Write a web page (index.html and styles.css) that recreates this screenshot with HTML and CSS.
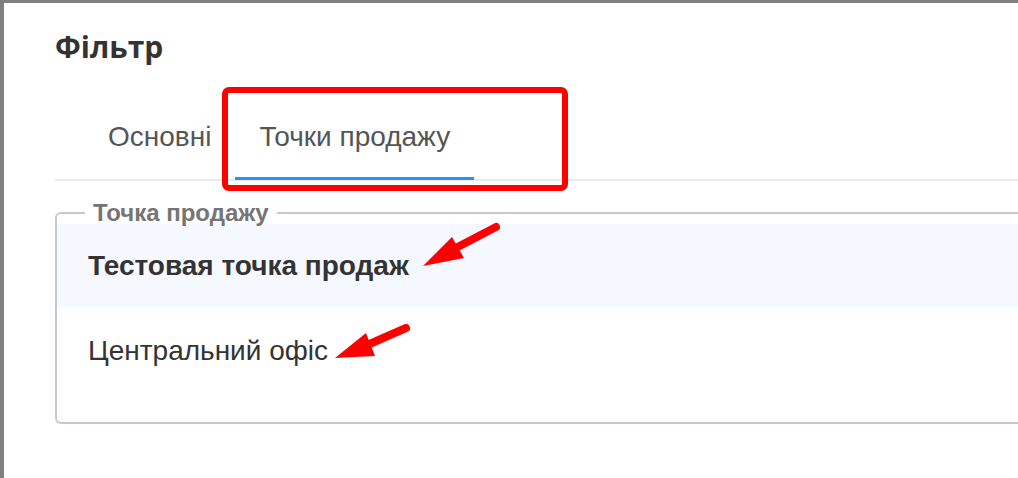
FILE: index.html
```html
<!DOCTYPE html>
<html lang="uk">
<head>
<meta charset="utf-8">
<title>Фільтр</title>
<link rel="stylesheet" href="styles.css">
</head>
<body>
<div class="modal">
  <h1 class="title">Фільтр</h1>
  <div class="tabs">
    <div class="tab">Основні</div>
    <div class="tab tab-active">Точки продажу</div>
  </div>
  <fieldset class="group">
    <legend class="group-legend">Точка продажу</legend>
    <div class="row row-selected">Тестовая точка продаж</div>
    <div class="row">Центральний офіс</div>
  </fieldset>
</div>
<svg class="annot" width="1018" height="478" viewBox="0 0 1018 478">
  <rect x="225" y="90" width="340" height="98" rx="4" ry="4" fill="none" stroke="#ff0000" stroke-width="6"/>
  <line x1="496" y1="227" x2="450" y2="251" stroke="#ff0000" stroke-width="8" stroke-linecap="round"/>
  <polygon points="423,266 452,237 464,258" fill="#ff0000"/>
  <line x1="406" y1="328" x2="365" y2="346" stroke="#ff0000" stroke-width="8" stroke-linecap="round"/>
  <polygon points="335,358 366,333 375,356" fill="#ff0000"/>
</svg>
</body>
</html>
```

FILE: styles.css
```css
html, body {
  margin: 0;
  padding: 0;
}
body {
  background: #808080;
  width: 1018px;
  height: 478px;
  overflow: hidden;
  position: relative;
  font-family: "Liberation Sans", Arial, sans-serif;
}
.modal {
  margin: 3px 0 0 4px;
  width: 1014px;
  height: 475px;
  overflow: hidden;
  background: #ffffff;
  padding: 0 0 0 51px;
  box-sizing: border-box;
}
.title {
  margin: 0;
  padding-top: 24px;
  font-family: "Open Sans", sans-serif;
  font-weight: 700;
  font-size: 30px;
  line-height: 40px;
  color: #333333;
}
.tabs {
  display: flex;
  margin-top: 30px;
  padding-left: 29px;
  border-bottom: 2px solid #ebebeb;
}
.tab {
  padding: 0 24px;
  height: 83px;
  display: flex;
  align-items: center;
  font-size: 28px;
  color: #555555;
  box-sizing: border-box;
  border-bottom: 3px solid transparent;
  margin-bottom: -1px;
}
.tab-active {
  border-bottom-color: #2196f3;
}
.group {
  margin: 21px -30px 0 0;
  padding: 0 0 28px 0;
  border: 2px solid #c5c6d6;
  border-radius: 6px;
  min-width: 0;
}
.group-legend {
  margin-left: 28px;
  padding: 0 8px;
  font-size: 24px;
  font-weight: 700;
  color: #757575;
  line-height: 22px;
}
.row {
  height: 83px;
  display: flex;
  align-items: center;
  padding-left: 31px;
  font-size: 28px;
  color: #333333;
}
.row-selected {
  background: #f5f8fe;
  font-weight: 700;
}
.row + .row {
  height: 87px;
}
.annot {
  position: absolute;
  left: 0;
  top: 0;
  pointer-events: none;
}
```
